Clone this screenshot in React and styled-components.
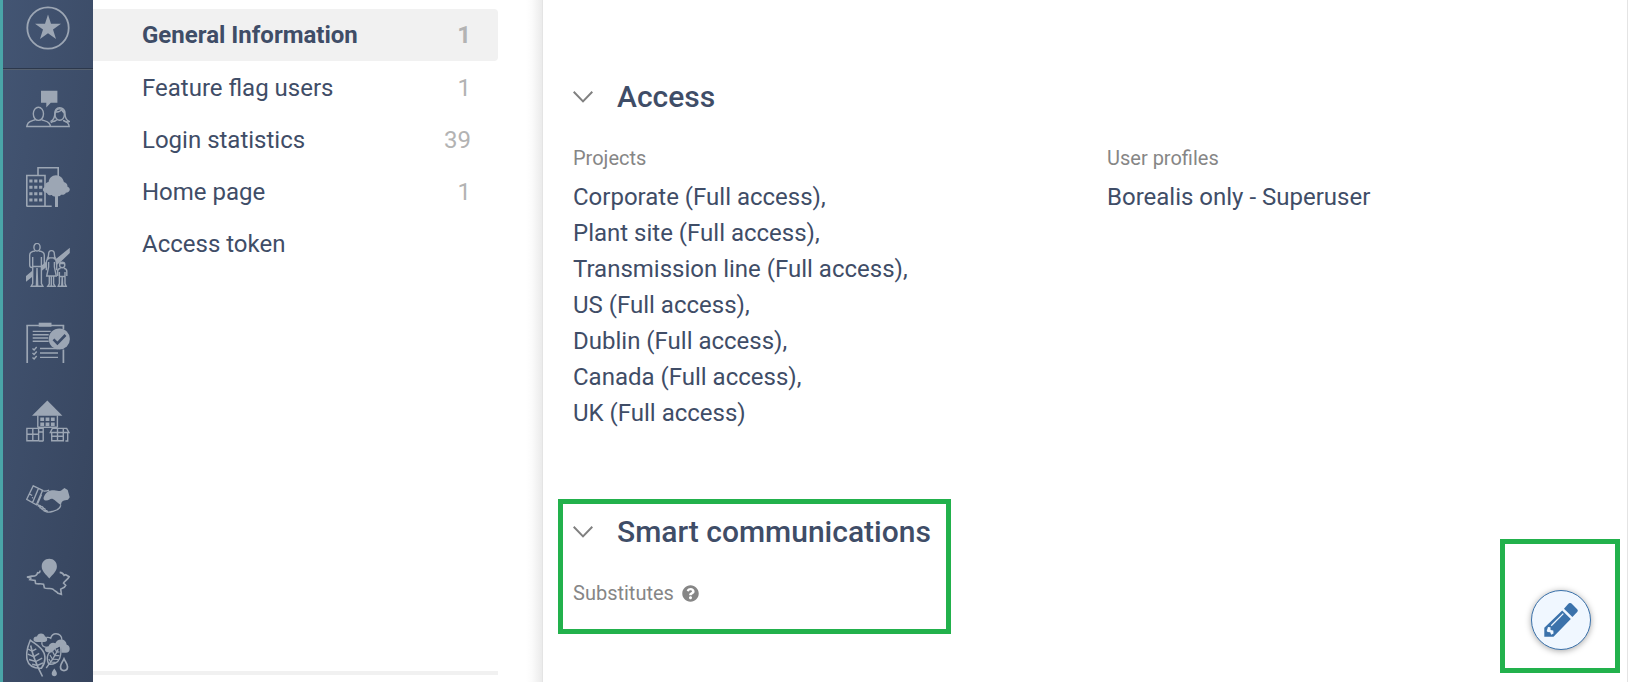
import React, { useState } from 'react';
import styled, { createGlobalStyle } from 'styled-components';
import { FaQuestionCircle } from 'react-icons/fa';

const GlobalStyle = createGlobalStyle`
  *, *::before, *::after {
    box-sizing: border-box;
  }

  body {
    margin: 0;
    background: #fff;
    color: #3f4d67;
    font-family: Roboto, "Liberation Sans", sans-serif;
    font-size: 24px;
  }
`;

const StarIcon = () => (
  <Icon viewBox="0 0 44 44">
    <circle cx="22" cy="22" r="20.7" strokeWidth="1.8" />
    <path
      className="fill"
      d="M22 8.500l3 9.200h10l-8 5.900 3 9.500-8-5.800-8 5.800 3-9.500-8-5.900h10z"
    />
  </Icon>
);

const PeopleIcon = () => (
  <Icon viewBox="0 0 44 44">
    <path className="fill" d="M15 3.7h16.4v12h-6.6L20.3 20.6v-4.9H15z" />
    <ellipse cx="12.4" cy="26.8" rx="5.1" ry="6.6" />
    <path d="M9.5 32.4c-1 1-5.5 1.3-7.3 3.6-.9 1.2-1.2 2.4-1.4 3.5h42.4c-.2-3.2-2.2-5-6.2-6.200M15.400 32.400c1.500 1.400 5.600 1.200 7.700 3.800.8 1 1.200 2.200 1.400 3.300" />
    <ellipse cx="33.7" cy="27.5" rx="4.7" ry="5.8" />
    <path d="M30.9 32.6c-1.3 1.8-4.500 1.300-6 3.200M28.800 27c-.2-3.700 1.700-6.300 4.900-6.300s5.300 2.400 5.300 5.600c0 4.300 1.200 7 4.200 8.200-1.900.9-3.900.6-5.600-.9M28.800 27c-.2 3.700-1.500 6-3.600 7.200 1.800.8 3.600.3 5-1M29 24.800c3.500.6 5.500-.3 6.700-2.300.3 1.800 1.500 3 3.200 3.600" />
  </Icon>
);

const BuildingIcon = () => (
  <Icon viewBox="0 0 44 44">
    <path d="M12 10V2.800h20.200V12M.8 41.300V10.500H19v30.800M.5 41.300h25.200" strokeWidth="1.6" />
    <path
      className="fill"
      d="M3.300 14.500h3.200v3H3.300zm4.900 0h3.200v3H8.200zm4.900 0h3.200v3h-3.200zM3.300 20.800h3.200v3H3.300zm4.900 0h3.200v3H8.200zm4.900 0h3.200v3h-3.200zM3.300 27.200h3.200v3H3.300zm4.900 0h3.200v3H8.200zm4.900 0h3.200v3h-3.200zM3.300 33.600h3.200v3H3.300zm4.900 0h3.200v3H8.200zm4.900 0h3.200v3h-3.200z"
    />
    <path
      className="fill"
      d="M29 42V31.500c-1.500.3-2.600-.3-3.200-1.400-2.300.4-4.300-.3-4.800-2.200-2.500-.2-4.200-1.600-4.100-3.400.1-1.500 1.300-2.300 2.300-2.600-.6-2.500 1-4.500 3.400-4.800.4-4 3.300-6.900 7.400-6.900 4.300 0 7.200 2.900 7.900 6.900 2.500.6 3.700 2.300 3.600 4.600 1.600.6 2.300 1.500 2.300 2.900 0 1.900-1.800 3.100-4 3.200-.6 1.700-2.500 2.300-4.800 1.900-.6 1-1.600 1.500-3 1.500V42z"
    />
  </Icon>
);

const FamilyIcon = () => (
  <Icon viewBox="0 0 44 44">
    <path className="fill" d="M0 33l6-5v6l-6 4.800zM15.500 22.500l5-4v5.500l-5 4zM29.300 16.500L43.800 4.800v5.200L35 18.500l-5 4z" />
    <ellipse cx="11" cy="4.200" rx="3.100" ry="3.800" />
    <path d="M9.300 8C6 8.300 3.800 9.300 3.700 12v10.300c0 1.600 1.200 2.200 2.600 2.200M12.700 8c3.300.3 5.500 1.300 5.600 4v10.300c0 1.600-1.200 2.200-2.600 2.200M6.700 14v26.500l-1.500 2.700h5.200L11 25l.7 18.200h5.200l-1.500-2.700V14M6.700 23.500h8.700" />
    <path d="M25.500 7.600c-2.200 0-2.900 1.500-2.900 3.700 0 1.800-.3 2.700-1 3.600h7.700c-.7-.9-.9-1.800-.9-3.600 0-2.200-.7-3.700-2.900-3.700zM23.500 15.200c-2.500.6-3.200 2-3.200 4.300v7.800M27.500 15.200c2.500.6 3.200 2 3.200 4.300v7.800M22.600 19v5l-1.900 9h9.600l-1.900-9v-5M23.300 33v8l-1.500 2.200h3.500V33M27.600 33v8l1.500 2.200h-3.500" />
    <ellipse cx="36.200" cy="22" rx="2.600" ry="2.700" />
    <path d="M33.500 20.500h5.600M34.600 25.200c-2 .3-3 1.300-3 3v4.700M37.800 25.200c2 .3 3 1.300 3 3v4.700M33.400 29v11.500L32.200 43.200h3.500l.5-9 .5 9h3.500L39 40.500V29M33.400 33.500H39" />
  </Icon>
);

const ClipboardIcon = () => (
  <Icon viewBox="0 0 44 44">
    <path d="M1.200 42V4.500M37.400 42V28.500M37.400 8.500V4.500" strokeWidth="1.7" />
    <path d="M.4 4.500h37.800" />
    <path className="fill" d="M12.700 1.700h12.800v4H12.700z" />
    <path d="M6.700 10.400h18M6.700 13.700h16M6.700 17h15.500M6.700 20.300h16M14 27.500h18M14 32h18M14 36.400h18" />
    <path d="M6.500 27.500l1.600 1.500 2.600-3M6.500 32l1.600 1.500 2.600-3M6.500 36.500L8.100 38l2.600-3" />
    <circle className="fill" cx="33.3" cy="18" r="10.6" />
    <path className="mark" d="M27.500 18.300l3.900 4 8.100-8.300" />
  </Icon>
);

const HousesIcon = () => (
  <Icon viewBox="0 0 44 44">
    <path className="fill" d="M21.300 1.500L36.400 16.800H6z" />
    <path d="M11.800 16.500v12M31.400 16.500v12M11.800 28.300h19.600" />
    <path
      className="fill"
      d="M14.300 18.500h3.800v3.500h-3.800zm5.300 0h3.800v3.500h-3.800zm5.300 0h3.800v3.500h-3.800zM14.300 23.500h3.800V27h-3.800zm5.300 0h3.800V27h-3.800zm5.300 0h3.800V27h-3.800z"
    />
    <path d="M17.200 42.300V29.400H.9v12.300h11.700V29.400M.9 35.300h11.700M6.800 29.400v12.300M12.600 33h4.600M13 42h4.200M25.700 33.500v8.200h11.600v-8.200M24.300 33.500l2-4.100h14.400l2.200 4.100zM41.700 33.500v8.500h-2.300M25.700 37.300h11.600M31.500 29.400v12.300M37.300 29.400v6" />
  </Icon>
);

const HandshakeIcon = () => (
  <Icon viewBox="0 0 44 44">
    <path d="M7.300 8.800l9.300 4.500-6.200 14.500-9.700-5.500zM12.500 11.300L6.600 25.500M3.500 17l2.700 1.500M17.400 14c2 .3 3.600 0 5.700-.8M11.300 27.300c1.500.7 1.700 2 2.900 3.200 3.300 3 5.300 4.500 7.700 4.600 2.200.4 4-.6 5.700-1 3.200-.6 6.300-2.600 7.200-5.800M15.500 17.500l-3.800 9" />
    <path d="M12 29.500c.8-1.700 2.800-1.300 2.500.6 1.400-1.200 3-.1 2.400 1.500 1.600-.7 2.700.5 2 1.900 1.500-.5 2.500.4 2.300 1.500" />
    <path
      className="fill"
      d="M17.600 20.700c1.200-3.800 3.700-6.800 7.300-7.300 3.800-.7 7.600 1.600 10.300 0l3.200-2.500 3.300 2.100 2 7.300-1.700 2.500-4 .8c-2.400.6-2.700 2.200-3 4.600-3.300-2-5.700-5.200-8.600-6.500-2.200-.5-3.500 1.700-5.700 1.800-1.800.3-3.600-.8-3.100-2.800z"
    />
    <circle className="fill" cx="6.500" cy="20.800" r=".7" />
  </Icon>
);

const MapIcon = () => (
  <Icon viewBox="0 0 44 44">
    <path
      className="fill"
      d="M23.300 3.800c4.500 0 7.600 3.200 7.600 7.600 0 4.800-4.200 8-7.600 12-3.400-4-7.600-7.200-7.600-12 0-4.400 3.100-7.600 7.600-7.600z"
    />
    <path d="M13.800 15.500c.5 1.600-.8 2.700-2.200 2.200-.8 3.200-3 3.700-6 3.400L1 22l3.800 1.200-1 1.500 5.300.8.500 3c2.600.8 5.400-.2 8 .8l.8 3.600c3.200 1.500 6.400-.5 8.800 1.500 1.400 1.900 3.600 1.900 4.400 3.600l3.800 1.400-.7-5.300 3.600-1.800 1.400-2-2.200-2.200c1-2 3.600-3 5.700-6.300l-3.500-2.100-1.600.7c-1.100-2.300-2.500-2.800-4.400-3" strokeWidth="1.6" />
  </Icon>
);

const LeavesIcon = () => (
  <Icon viewBox="0 0 44 44">
    <path d="M4.300 7.200c4.600 3.700 11.800 7 13.900 13.400 1.500 4.900.2 10.600-2.800 14.600C8 35.400 2.500 32.700 1.100 26.600-.2 20.400 1.500 13.600 4.300 7.200zM4.700 12.500C6.500 22 11 33 16.500 43.500" strokeWidth="1.6" />
    <path d="M2 16l4.100 2.200 4.200-2.300M1.800 21.200l6 2.500 5.400-3.400M3 26.500l6.700 2 6.500-3.300M6.200 31.300l5.200 1.200 5.600-2.600" />
    <path className="fill" d="M10.600 9C8.600 9 7.500 8 7.500 6.300S8.700 3.400 11 3.600c.5-2 1.900-3 4-3s3.600 1.100 4 3c1.500.3 2.200 1.400 2.200 2.700C21.200 8 20.100 9 18.300 9z" />
    <path d="M16 9c-1 3.500 1.700 5.600 5.200 5.300M20.500 4.500c1.800-.4 3.200 0 4.200.8C25.500 2.400 27.500.8 30 .8c3.700 0 6 2.600 5.800 6" />
    <path
      className="fill"
      d="M22 19.300c-2.200-.3-3.300-1.700-3-3.300.3-1.700 1.800-2.700 3.600-2.700.7-2.400 2.300-3.600 4.600-3.600.8 0 1.500.2 2.200.5C30.300 7.700 32.200 6.400 35 6.400c3.200 0 5.400 2 5.700 5.300 2 .5 3 2.200 3 4.300 0 2.300-1.500 3.800-3.800 3.800h-4.300l-.8-7.300-4.800 2.700-4.500 4.200z"
    />
    <path d="M34.400 12.500c-5 2.300-10.300 4.300-12.300 9.100-1.400 3.200-.6 6.800.6 9.500 4.600.8 9.300-1.500 11-5.900 1.500-3.800 1.500-8.500.7-12.700zM32.200 16.300c-2.800 6-6.900 12.300-12 18.700" />
    <path d="M33.500 18.800l-2.800.4-1.300-3M33.400 22.700l-4.700-.1-2.200-4.200M32 26.500l-5.500-.3-2.500-4.200M29.600 29.300l-4.800-.3-2-3" strokeWidth="1.2" />
    <path d="M38 25.800c-1.500 3.200-3.500 5.200-3.500 8 0 2.300 1.500 3.800 3.500 3.800s3.500-1.500 3.500-3.800c0-2.800-2-4.800-3.500-8z" strokeWidth="1.700" />
    <path className="fill" d="M28.300 35.400c-1.100 2-2.600 3.100-2.600 5.100 0 1.700 1.100 2.800 2.600 2.800s2.600-1.100 2.600-2.800c0-2-1.500-3.100-2.600-5.100z" />
  </Icon>
);

const PencilIcon = () => (
  <svg width="34" height="34" viewBox="0 0 34 34" fill="#3b72ab" aria-hidden="true">
    <path d="M24.600.6c1-.9 2-.8 2.900 0l5.700 5.600c.8.9.8 1.900 0 2.800l-4.800 5.100-8.400-8.400z" />
    <path fillRule="evenodd" d="M18.200 7.500l8.600 8.500L9.500 33.700H.3v-9zM4 24l-1.300 4 1 1 2.500.2 1 2.500 2.300-1.200-.2-3-2.700-.5-.2-2.700z" />
    <path d="M7.200 22.700L19.300 10.600" stroke="#f0f7ff" strokeWidth="1.300" />
  </svg>
);

const modules = [
  { label: 'Stakeholders', Glyph: PeopleIcon },
  { label: 'Organizations', Glyph: BuildingIcon },
  { label: 'Families', Glyph: FamilyIcon },
  { label: 'Commitments', Glyph: ClipboardIcon },
  { label: 'Properties', Glyph: HousesIcon },
  { label: 'Agreements', Glyph: HandshakeIcon },
  { label: 'Territories', Glyph: MapIcon },
  { label: 'Environment', Glyph: LeavesIcon },
];

const tabs = [
  { label: 'General Information', count: 1 },
  { label: 'Feature flag users', count: 1 },
  { label: 'Login statistics', count: 39 },
  { label: 'Home page', count: 1 },
  { label: 'Access token' },
];

const projects = ['Corporate', 'Plant site', 'Transmission line', 'US', 'Dublin', 'Canada', 'UK'];

const Section = ({ title, highlighted, children }) => {
  const [open, setOpen] = useState(true);

  return (
    <SectionBox $highlighted={highlighted}>
      <SectionTitle>
        <Toggle type="button" aria-expanded={open} onClick={() => setOpen(!open)}>
          <Chevron viewBox="0 0 20 12" $open={open} aria-hidden="true">
            <path d="M.7.8l9.300 9.600L19.300.8" />
          </Chevron>
          {title}
        </Toggle>
      </SectionTitle>
      {open && children}
    </SectionBox>
  );
};

const App = () => {
  const [activeTab, setActiveTab] = useState('General Information');

  return (
    <Layout>
      <GlobalStyle />
      <Rail aria-label="Modules">
        <RailTop>
          <RailLink href="#favorites" aria-label="Favorites">
            <StarIcon />
          </RailLink>
        </RailTop>
        {modules.map(({ label, Glyph }) => (
          <RailLink key={label} href={`#${label.toLowerCase()}`} aria-label={label}>
            <Glyph />
          </RailLink>
        ))}
      </Rail>

      <Sidebar aria-label="Sections">
        {tabs.map(({ label, count }) => (
          <Tab
            key={label}
            href={`#${label.toLowerCase().replaceAll(' ', '-')}`}
            $active={label === activeTab}
            onClick={() => setActiveTab(label)}
          >
            {label}
            {count !== undefined && <Count>{count}</Count>}
          </Tab>
        ))}
        <SidebarRule />
      </Sidebar>
      <Gutter />

      <Content>
        <Section title="Access">
          <Fields>
            <Field>
              <dt>Projects</dt>
              {projects.map((name, i) => (
                <dd key={name}>{`${name} (Full access)${i < projects.length - 1 ? ',' : ''}`}</dd>
              ))}
            </Field>
            <Field>
              <dt>User profiles</dt>
              <dd>Borealis only - Superuser</dd>
            </Field>
          </Fields>
        </Section>

        <Section title="Smart communications" highlighted>
          <Field>
            <dt>
              Substitutes
              <FaQuestionCircle size={17} aria-hidden="true" />
            </dt>
          </Field>
        </Section>
      </Content>

      <EditFrame>
        <EditButton type="button" aria-label="Edit">
          <PencilIcon />
        </EditButton>
      </EditFrame>
    </Layout>
  );
};

export default App;

const Layout = styled.div`
  position: relative;
  display: flex;
  height: 100vh;
  overflow: hidden;
`;

const Rail = styled.nav`
  flex: 0 0 93px;
  border-left: 3px solid #4aa5a8;
  background: linear-gradient(100deg, #435573, #36445d);
  overflow: hidden;
`;

const RailTop = styled.div`
  height: 70px;
  padding-bottom: 14px;
  border-bottom: 1px solid #55606f;
  box-shadow: inset 0 -1px #2c384c;

  a {
    height: 100%;
  }
`;

const RailLink = styled.a`
  display: flex;
  align-items: center;
  justify-content: center;
  height: 78px;
  padding-right: 1px;
`;

const Icon = styled.svg.attrs({ 'aria-hidden': true })`
  width: 44px;
  height: 44px;
  fill: none;
  stroke: #9ca6b4;
  stroke-width: 1.4;

  .fill {
    fill: #9ca6b4;
    stroke: none;
  }

  .mark {
    stroke: #3d4d69;
    stroke-width: 2.6;
  }
`;

const Sidebar = styled.nav`
  display: flex;
  flex-direction: column;
  flex: 0 0 405px;
  padding: 9px 0 7px;
`;

const Tab = styled.a`
  display: flex;
  align-items: center;
  justify-content: space-between;
  height: 52px;
  margin-bottom: ${({ $active }) => ($active ? '1px' : '0')};
  padding: 0 27px 0 49px;
  border-radius: 0 4px 4px 0;
  background: ${({ $active }) => ($active ? '#f1f1f1' : 'transparent')};
  color: #3f4d67;
  font-weight: ${({ $active }) => ($active ? 700 : 400)};
  text-decoration: none;
`;

const Count = styled.span`
  color: #b3b3b3;
`;

const SidebarRule = styled.hr`
  width: 100%;
  height: 4px;
  margin: auto 0 0;
  border: 0;
  background: #f1f1f1;
`;

const Gutter = styled.div`
  flex: 0 0 45px;
  border-right: 1px solid #e4e4e4;
  background: linear-gradient(to left, #ebebeb, #fbfbfb 10px, #fff 16px);
`;

const Content = styled.main`
  flex: 1;
  min-width: 0;
  padding: 69px 30px 0;
  border-right: 1px solid #e4e4e4;
`;

const SectionBox = styled.section`
  padding-bottom: 68px;

  ${({ $highlighted }) =>
    $highlighted &&
    `
    width: fit-content;
    margin-left: -15px;
    padding: 0 15px 15px 10px;
    border: 5px solid #22b14c;
  `}
`;

const SectionTitle = styled.h2`
  margin: 0;
  font-size: 30px;
  font-weight: 500;
  line-height: 56px;
`;

const Toggle = styled.button`
  display: flex;
  align-items: center;
  gap: 24px;
  padding: 0;
  border: 0;
  background: none;
  color: inherit;
  font: inherit;
  cursor: pointer;
`;

const Chevron = styled.svg`
  width: 20px;
  height: 12px;
  fill: none;
  stroke: #808080;
  stroke-width: 2;
  transform: ${({ $open }) => ($open ? 'none' : 'rotate(-90deg)')};
`;

const Fields = styled.div`
  display: grid;
  grid-template-columns: 1fr 1fr;
  gap: 44px;
`;

const Field = styled.dl`
  margin: 0;
  padding-top: 18px;

  dt {
    display: flex;
    align-items: center;
    gap: 8px;
    margin-bottom: 6px;
    color: #868686;
    font-size: 20px;
    line-height: 30px;
  }

  dd {
    margin: 0;
    line-height: 36px;
  }
`;

const EditFrame = styled.div`
  position: absolute;
  right: 8px;
  bottom: 9px;
  padding: 46px 24px 18px 26px;
  border: 5px solid #22b14c;
`;

const EditButton = styled.button`
  display: flex;
  align-items: center;
  justify-content: center;
  width: 60px;
  height: 60px;
  padding: 0;
  border: 1px solid #3b72ab;
  border-radius: 50%;
  background: #f0f7ff;
  box-shadow: 0 1px 6px rgba(0, 0, 0, 0.35);
  cursor: pointer;
`;
